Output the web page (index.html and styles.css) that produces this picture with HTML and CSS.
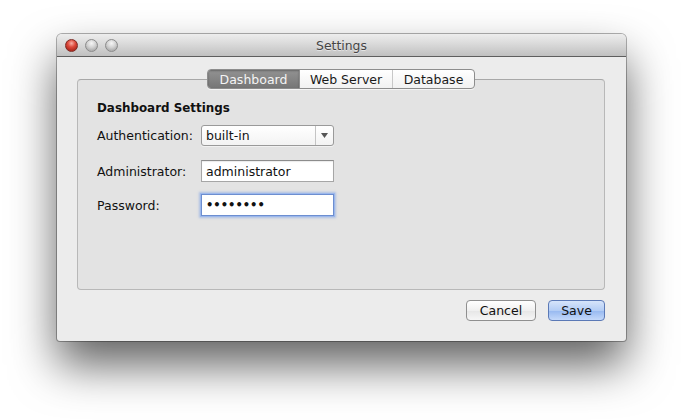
FILE: index.html
```html
<!DOCTYPE html>
<html>
<head>
<meta charset="utf-8">
<link rel="stylesheet" href="styles.css">
</head>
<body>
<div class="window">
  <div class="titlebar">
    <div class="lights">
      <span class="light red"></span>
      <span class="light gray"></span>
      <span class="light gray"></span>
    </div>
    <div class="title">Settings</div>
  </div>
  <div class="wbody">
    <div class="tabs">
      <div class="tab sel">Dashboard</div>
      <div class="tab">Web Server</div>
      <div class="tab">Database</div>
    </div>
    <div class="panel">
      <div class="heading">Dashboard Settings</div>
      <div class="row">
        <label class="lbl">Authentication:</label>
        <div class="select"><span class="sval">built-in</span><span class="sarrow"><svg width="7" height="5" viewBox="0 0 7 5"><path d="M0 0H7L3.5 5Z" fill="#555"/></svg></span></div>
      </div>
      <div class="row">
        <label class="lbl">Administrator:</label>
        <div class="input">administrator</div>
      </div>
      <div class="row">
        <label class="lbl">Password:</label>
        <div class="input focus"><span class="dots">••••••••</span></div>
      </div>
    </div>
    <div class="buttons">
      <div class="btn">Cancel</div>
      <div class="btn primary">Save</div>
    </div>
  </div>
</div>
</body>
</html>
```
FILE: styles.css
```css
html, body { margin: 0; padding: 0; background: #fff; }
body {
  width: 682px; height: 420px; overflow: hidden;
  padding: 34px 0 0 57px; box-sizing: border-box;
  font-family: "DejaVu Sans", sans-serif; font-size: 12.5px; color: #111;
}
.window {
  width: 569px; height: 307px;
  border-radius: 5px 5px 3px 3px;
  background: #ececec;
  box-shadow: 0 24px 46px rgba(0,0,0,0.62), 0 0 0 1px rgba(0,0,0,0.3);
  display: flex; flex-direction: column; overflow: hidden;
}
.titlebar {
  height: 22px; flex: none;
  background: linear-gradient(#ededed, #dcdcdc 40%, #c0c0c0);
  border-bottom: 1px solid #5e5e5e;
  display: flex; align-items: center; position: relative;
}
.lights { display: flex; gap: 7px; padding-left: 8px; }
.light {
  width: 13px; height: 13px; border-radius: 50%;
  box-sizing: border-box;
}
.light.red {
  background: radial-gradient(circle at 50% 30%, #f8b0a6 0, #de4a3c 40%, #b22a1f 75%, #d9584a 100%);
  border: 1px solid #7d2a24;
}
.light.gray {
  background: radial-gradient(circle at 50% 30%, #f6f6f6 0, #d2d2d2 45%, #b0b0b0 75%, #d0d0d0 100%);
  border: 1px solid #8a8a8a;
}
.title {
  position: absolute; left: 0; right: 0; text-align: center;
  color: #444; font-size: 12.4px; top: 4px;
  text-shadow: 0 1px 0 rgba(255,255,255,0.5);
}
.wbody {
  flex: 1; display: flex; flex-direction: column;
  padding: 12px 21px 0 20px;
}
.tabs {
  align-self: center; display: flex; height: 20px;
  border: 1px solid #8d8d8d; border-radius: 4px; box-sizing: border-box;
  background: linear-gradient(#ffffff, #f1f1f1);
  position: relative; z-index: 1; overflow: hidden;
  box-shadow: 0 1px 0 rgba(255,255,255,0.6);
}
.tab {
  display: flex; align-items: center; justify-content: center;
  color: #1a1a1a; line-height: 18px; padding-top: 1px;
}
.tab:nth-child(1) { width: 91px; }
.tab:nth-child(2) { width: 92px; border-left: 1px solid #8d8d8d; }
.tab:nth-child(3) { width: 81px; border-left: 1px solid #c8c8c8; }
.tab.sel {
  background: linear-gradient(#939393, #767676);
  color: #f4f4f4;
  box-shadow: inset 0 1px 2px rgba(0,0,0,0.3);
}
.panel {
  margin-top: -10px; height: 211px; box-sizing: border-box;
  background: #e3e3e3;
  border: 1px solid #b8b8b8; border-top-color: #a8a8a8;
  border-radius: 4px;
  padding: 20px 19px 0 19px;
  display: flex; flex-direction: column;
}
.heading { font-weight: bold; font-size: 11.9px; height: 17px; line-height: 17px; }
.row { display: flex; align-items: center; }
.row:nth-child(2) { margin-top: 8px; }
.row:nth-child(3) { margin-top: 14px; }
.row:nth-child(4) { margin-top: 12px; }
.lbl { width: 104px; flex: none; }
.select {
  width: 133px; height: 21px; box-sizing: border-box;
  border: 1px solid #9a9a9a; border-radius: 3px;
  background: linear-gradient(#ffffff, #f3f3f3);
  display: flex; align-items: center;
  box-shadow: 0 1px 0 rgba(255,255,255,0.5);
}
.sval { flex: 1; padding-left: 4px; }
.sarrow {
  width: 17px; height: 100%; border-left: 1px solid #c4c4c4;
  display: flex; align-items: center; justify-content: center;
}
.input {
  width: 133px; height: 22px; box-sizing: border-box;
  border: 1px solid #a6a6a6; border-top-color: #8c8c8c;
  background: #fff; padding-left: 4px;
  display: flex; align-items: center;
  box-shadow: inset 0 1px 1px rgba(0,0,0,0.08);
}
.input.focus {
  border: 1px solid #6d8ed0;
  box-shadow: 0 0 0 1px #9cb8ec, 0 0 2px 2px rgba(120,160,230,0.5);
}
.dots { font-size: 11.5px; font-weight: bold; }
.buttons {
  display: flex; justify-content: flex-end; gap: 12px; margin-top: 10px;
}
.btn {
  height: 21px; box-sizing: border-box;
  border: 1px solid #8f8f8f; border-radius: 4px;
  background: linear-gradient(#ffffff, #f0f0f0 50%, #e6e6e6 51%, #f6f6f6);
  display: flex; align-items: center; justify-content: center;
  color: #111;
}
.btn:nth-child(1) { width: 70px; }
.btn.primary {
  width: 57px;
  border-color: #5b79b6;
  background: linear-gradient(#d6e4fa, #b3cdf5 50%, #96b8f0 51%, #c4d9fa);
}
```
